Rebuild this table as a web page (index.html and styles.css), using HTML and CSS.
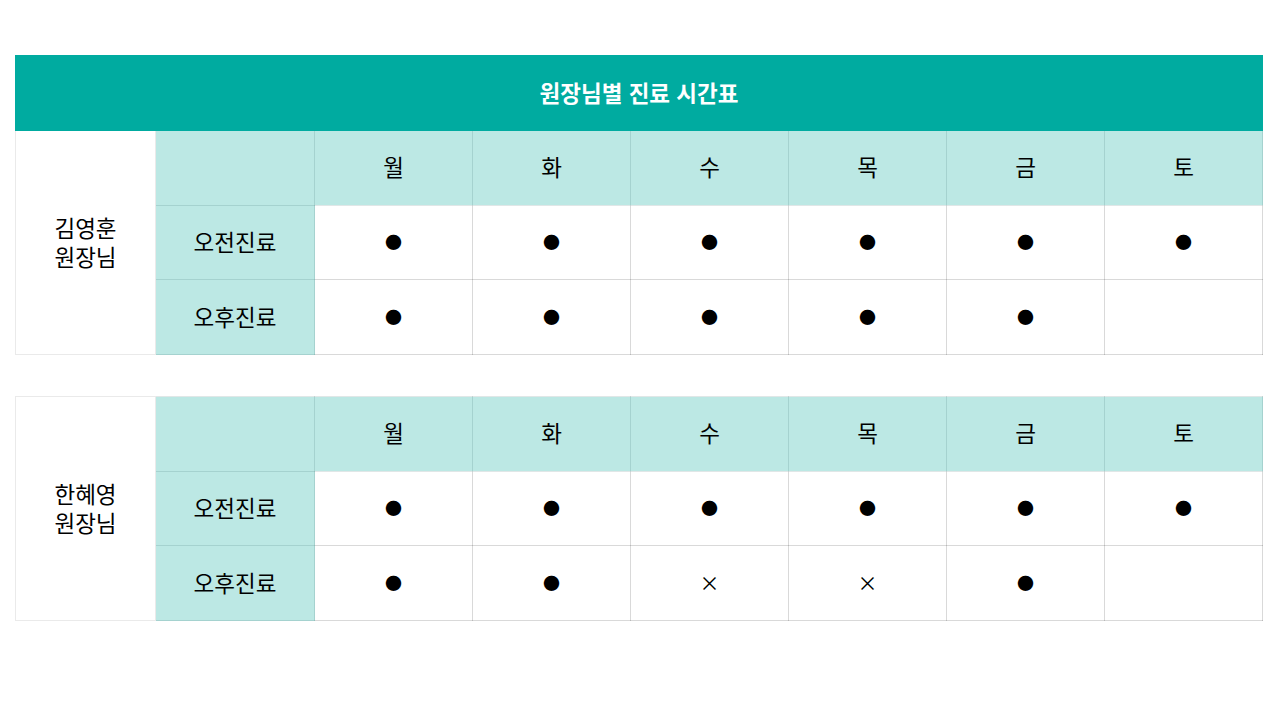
FILE: index.html
```html
<!DOCTYPE html>
<html lang="ko">
<head>
<meta charset="utf-8">
<title>원장님별 진료 시간표</title>
<link rel="stylesheet" href="styles.css">
</head>
<body>
<main class="page">
  <table class="schedule">
    <colgroup>
      <col class="c-name"><col class="c-label">
      <col class="c-day"><col class="c-day"><col class="c-day"><col class="c-day"><col class="c-day"><col class="c-day">
    </colgroup>
    <thead>
      <tr><th class="title" colspan="8">원장님별 진료 시간표</th></tr>
    </thead>
    <tbody>
      <tr>
        <td class="name" rowspan="3">김영훈<br>원장님</td>
        <td class="head"></td>
        <td class="head">월</td><td class="head">화</td><td class="head">수</td><td class="head">목</td><td class="head">금</td><td class="head">토</td>
      </tr>
      <tr>
        <td class="head">오전진료</td>
        <td class="mark">●</td><td class="mark">●</td><td class="mark">●</td><td class="mark">●</td><td class="mark">●</td><td class="mark">●</td>
      </tr>
      <tr>
        <td class="head">오후진료</td>
        <td class="mark">●</td><td class="mark">●</td><td class="mark">●</td><td class="mark">●</td><td class="mark">●</td><td class="mark"></td>
      </tr>
    </tbody>
  </table>

  <table class="schedule">
    <colgroup>
      <col class="c-name"><col class="c-label">
      <col class="c-day"><col class="c-day"><col class="c-day"><col class="c-day"><col class="c-day"><col class="c-day">
    </colgroup>
    <tbody>
      <tr>
        <td class="name" rowspan="3">한혜영<br>원장님</td>
        <td class="head"></td>
        <td class="head">월</td><td class="head">화</td><td class="head">수</td><td class="head">목</td><td class="head">금</td><td class="head">토</td>
      </tr>
      <tr>
        <td class="head">오전진료</td>
        <td class="mark">●</td><td class="mark">●</td><td class="mark">●</td><td class="mark">●</td><td class="mark">●</td><td class="mark">●</td>
      </tr>
      <tr>
        <td class="head">오후진료</td>
        <td class="mark">●</td><td class="mark">●</td><td class="mark cross">×</td><td class="mark cross">×</td><td class="mark">●</td><td class="mark"></td>
      </tr>
    </tbody>
  </table>
</main>
</body>
</html>
```

FILE: styles.css
```css
html, body {
  margin: 0;
  padding: 0;
  background: #ffffff;
}

body {
  font-family: "Noto Sans CJK KR", "Noto Sans", sans-serif;
  color: #000000;
}

.page {
  width: 1248px;
  padding: 55px 0 0 15px;
  display: flex;
  flex-direction: column;
  gap: 41px;
}

.schedule {
  width: 1248px;
  border-collapse: collapse;
  table-layout: fixed;
  border: 1px solid #eaeaea;
}

.c-name { width: 140px; }
.c-label { width: 159px; }
.c-day { width: 158px; }

.schedule th,
.schedule td {
  height: 71.7px;
  padding: 0 0 2px;
  text-align: center;
  vertical-align: middle;
  font-size: 22.5px;
  font-weight: 400;
  line-height: 29px;
  border: 1px solid rgba(0, 0, 0, 0.15);
}

.schedule .title {
  height: 72px;
  padding: 0 0 2px;
  background: #00aba0;
  color: #ffffff;
  font-size: 22.5px;
  font-weight: 700;
  border: 1px solid #00aba0;
}

.schedule .name {
  background: #ffffff;
  border-color: #eaeaea;
}

.schedule .head {
  background: #bce8e4;
  border-color: rgba(0, 60, 55, 0.12);
}

.schedule .mark {
  font-size: 17px;
  background: #ffffff;
}

.schedule .cross {
  font-size: 20px;
}
```
